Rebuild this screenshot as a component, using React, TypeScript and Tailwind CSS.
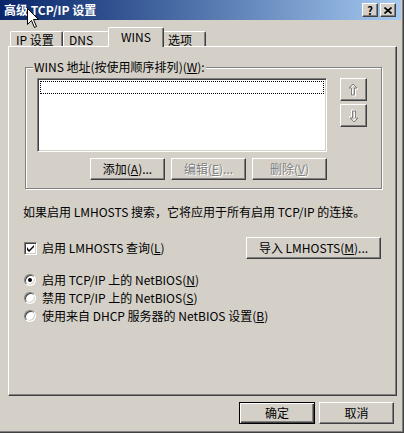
import React from "react";

const font = { fontFamily: '"Noto Sans CJK SC", "Noto Sans", sans-serif' };

const raised =
  "border border-t-white border-l-white border-r-[#404040] border-b-[#404040] shadow-[inset_-1px_-1px_0_#808080] bg-[#d4d0c8]";
const sunken =
  "border border-t-[#808080] border-l-[#808080] border-r-white border-b-white shadow-[inset_1px_1px_0_#404040,inset_-1px_-1px_0_#d4d0c8]";

function Btn({
  children,
  w,
  disabled,
  isDefault,
}: {
  children: React.ReactNode;
  w: string;
  disabled?: boolean;
  isDefault?: boolean;
}) {
  const base = isDefault
    ? "border border-black shadow-[inset_1px_1px_0_#fff,inset_-1px_-1px_0_#404040,inset_-2px_-2px_0_#808080] bg-[#d4d0c8]"
    : raised;
  return (
    <div
      className={`${base} ${w} h-[22px] flex items-center justify-center text-[12px] leading-none ${
        disabled ? "text-[#808080] [text-shadow:1px_1px_0_#fff]" : "text-black"
      }`}
    >
      {children}
    </div>
  );
}

function Arrow({ down }: { down?: boolean }) {
  const pts = "4.5,0.5 8.5,4.5 6,4.5 6,11.5 3,11.5 3,4.5 0.5,4.5";
  return (
    <div className={`${raised} w-[27px] h-[23px] flex items-center justify-center`}>
      <svg width="11" height="14" viewBox="0 0 11 14" className={down ? "rotate-180" : ""}>
        <polygon points={pts} transform="translate(1.5,1.5)" fill="none" stroke="#fff" strokeWidth="1" />
        <polygon points={pts} transform="translate(0.5,0.5)" fill="none" stroke="#808080" strokeWidth="1" />
      </svg>
    </div>
  );
}

function Radio({ checked, children }: { checked?: boolean; children: React.ReactNode }) {
  return (
    <div className="flex items-center h-[18px]">
      <div className="w-[12px] h-[12px] rounded-full bg-white border border-t-[#808080] border-l-[#808080] border-r-white border-b-white shadow-[inset_1px_1px_0_#404040,inset_-1px_-1px_0_#d4d0c8] flex items-center justify-center">
        {checked && <div className="w-[4px] h-[4px] rounded-full bg-black" />}
      </div>
      <span className="ml-[6px] text-[12px] leading-none">{children}</span>
    </div>
  );
}

function Tab({ label, selected, w }: { label: string; selected?: boolean; w: string }) {
  if (selected) {
    return (
      <div
        className={`${w} h-[20px] -mb-px -mx-[2px] relative z-10 bg-[#d4d0c8] border-t border-l border-t-white border-l-white border-r border-r-[#404040] shadow-[inset_-1px_0_0_#808080] rounded-t-[2px] flex items-start justify-center pt-[3px] text-[12px] leading-none`}
      >
        {label}
      </div>
    );
  }
  return (
    <div
      className={`${w} h-[15px] bg-[#d4d0c8] border-t border-l border-t-white border-l-white border-r border-r-[#404040] shadow-[inset_-1px_0_0_#808080] rounded-t-[2px] flex items-start pl-[5px] pt-[2px] text-[12px] leading-none`}
    >
      {label}
    </div>
  );
}

export default function App() {
  return (
    <div
      className="relative w-[404px] h-[433px] bg-[#d4d0c8] border-r border-b border-r-[#404040] border-b-[#404040] shadow-[inset_-1px_-1px_0_#808080] text-black overflow-hidden"
      style={font}
    >
      {/* Title bar */}
      <div className="h-[20px] w-[401px] bg-gradient-to-r from-[#0a246a] to-[#a6caf0] flex items-center pl-[4px] pr-[5px]">
        <span className="text-white font-bold text-[12px] leading-none">高级 TCP/IP 设置</span>
        <div className="ml-auto flex">
          <div className={`${raised} w-[16px] h-[14px] flex items-center justify-center text-[11px] font-bold leading-none`}>?</div>
          <div className={`${raised} w-[16px] h-[14px] ml-[2px] flex items-center justify-center`}>
            <svg width="8" height="7" viewBox="0 0 8 7">
              <path d="M0.5 0.5 L7.5 6.5 M7.5 0.5 L0.5 6.5" stroke="#000" strokeWidth="1.6" />
            </svg>
          </div>
        </div>
      </div>

      {/* Tabs + panel */}
      <div className="pl-[8px] pt-[7px]">
        <div className="flex items-end h-[19px] pl-[2px]">
          <Tab label="IP 设置" w="w-[53px]" />
          <Tab label="DNS" w="w-[47px]" />
          <Tab label="WINS" w="w-[56px]" selected />
          <Tab label="选项" w="w-[44px]" />
        </div>
        <div className="w-[389px] h-[350px] border border-t-white border-l-white border-r-[#404040] border-b-[#404040] shadow-[inset_-1px_-1px_0_#808080] pl-[14px] pr-[14px] pt-[20px]">
          {/* Group box */}
          <div className="relative ml-[2px] h-[122px] border border-[#808080] shadow-[inset_1px_1px_0_#fff,1px_1px_0_#fff] pl-[11px] pt-[10px] flex">
            <span className="absolute left-[7px] -top-[7px] bg-[#d4d0c8] px-[1px] text-[12px] leading-none">
              WINS 地址(按使用顺序排列)(<u>W</u>):
            </span>
            <div className="w-[290px] flex flex-col">
              <div className={`${sunken} h-[74px] bg-white p-[2px]`}>
                <div className="h-[13px] border border-dotted border-[#000]" />
              </div>
              <div className="flex justify-end gap-[6px] mt-[6px]">
                <Btn w="w-[75px]">添加(<u>A</u>)...</Btn>
                <Btn w="w-[75px]" disabled>编辑(<u>E</u>)...</Btn>
                <Btn w="w-[75px]" disabled>删除(<u>V</u>)</Btn>
              </div>
            </div>
            <div className="ml-[13px] flex flex-col gap-[3px]">
              <Arrow />
              <Arrow down />
            </div>
          </div>

          <div className="mt-[15px] text-[12px] leading-[16px]">
            如果启用 LMHOSTS 搜索，它将应用于所有启用 TCP/IP 的连接。
          </div>

          <div className="mt-[17px] flex items-center pl-[1px]">
            <div className={`${sunken} w-[13px] h-[13px] bg-white flex items-center justify-center`}>
              <svg width="7" height="7" viewBox="0 0 7 7">
                <path d="M0 2 L0 5 L2 7 L7 2 L7 0 L2 5 Z" fill="#000" />
              </svg>
            </div>
            <span className="ml-[5px] text-[12px] leading-none">
              启用 LMHOSTS 查询(<u>L</u>)
            </span>
            <div className="ml-auto mr-[1px]">
              <Btn w="w-[135px]">导入 LMHOSTS(<u>M</u>)...</Btn>
            </div>
          </div>

          <div className="mt-[12px] pl-[1px] flex flex-col">
            <Radio checked>
              启用 TCP/IP 上的 NetBIOS(<u>N</u>)
            </Radio>
            <Radio>
              禁用 TCP/IP 上的 NetBIOS(<u>S</u>)
            </Radio>
            <Radio>
              使用来自 DHCP 服务器的 NetBIOS 设置(<u>B</u>)
            </Radio>
          </div>
        </div>
      </div>

      {/* Bottom buttons */}
      <div className="flex justify-end gap-[4px] pr-[9px] mt-[6px]">
        <Btn w="w-[76px]" isDefault>确定</Btn>
        <Btn w="w-[75px]">取消</Btn>
      </div>

      {/* Mouse cursor */}
      <svg className="absolute left-[27px] top-[8px]" width="13" height="21" viewBox="0 0 13 21">
        <polygon points="0.5,0.5 0.5,16.5 4.5,12.5 7.5,19.5 9.5,18.5 6.5,11.5 11.5,11.5" fill="#fff" stroke="#000" strokeWidth="1" />
      </svg>
    </div>
  );
}
